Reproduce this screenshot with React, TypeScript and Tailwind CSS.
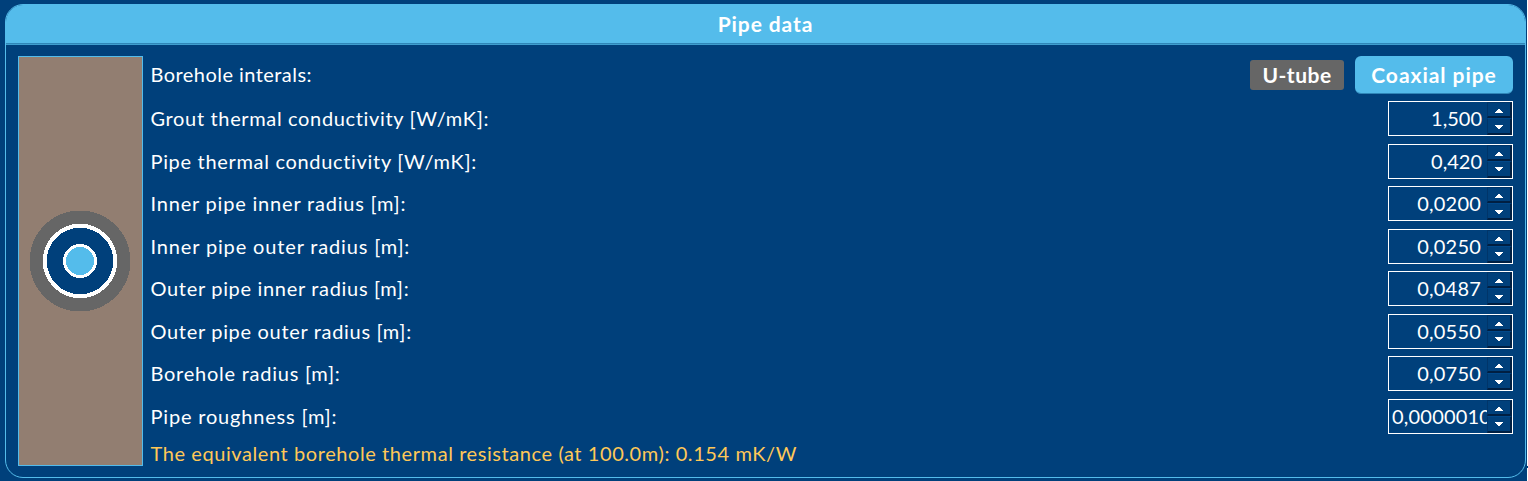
const fields = [
  { label: "Grout thermal conductivity [W/mK]:", value: "1,500", track: "tracking-[0.65px]" },
  { label: "Pipe thermal conductivity [W/mK]:", value: "0,420", track: "tracking-[0.68px]" },
  { label: "Inner pipe inner radius [m]:", value: "0,0200", track: "tracking-[0.8px]" },
  { label: "Inner pipe outer radius [m]:", value: "0,0250", track: "tracking-[0.85px]" },
  { label: "Outer pipe inner radius [m]:", value: "0,0487", track: "tracking-[0.68px]" },
  { label: "Outer pipe outer radius [m]:", value: "0,0550", track: "tracking-[0.68px]" },
  { label: "Borehole radius [m]:", value: "0,0750", track: "tracking-[0.75px]" },
  { label: "Pipe roughness [m]:", value: "0,0000010", track: "tracking-[0.82px]" },
];

function Arrow({ down = false }: { down?: boolean }) {
  return (
    <svg width="8" height="4" viewBox="0 0 8 4" className="fill-white" shapeRendering="crispEdges">
      <path d={down ? "M0 0h8v1H0zM1 1h6v1H1zM2 2h4v1H2zM3 3h2v1H3z" : "M3 0h2v1H3zM2 1h4v1H2zM1 2h6v1H1zM0 3h8v1H0z"} />
    </svg>
  );
}

function SpinBox({ value }: { value: string }) {
  return (
    <div className="flex h-[35px] w-[125px] border border-white">
      <div className={`flex min-w-0 flex-1 items-center overflow-hidden whitespace-nowrap pb-px ${value.length > 6 ? "pl-[3px] tracking-[0.2px]" : value.length > 5 ? "justify-end pr-[6px] tracking-[0.2px]" : "justify-end pr-[5px]"}`}>
        {value}
      </div>
      <div className="flex w-[25px] shrink-0 flex-col">
        <div className="flex h-4 items-center justify-center border-t border-r-2 border-b-2 border-l border-t-[#003569] border-r-[#001f42] border-b-[#001f42] border-l-[#003569] pt-[3px]"><Arrow /></div>
        <div className="flex h-[17px] items-center justify-center border-t border-r-2 border-b-2 border-l border-t-[#00488a] border-r-[#001f42] border-b-[#001f42] border-l-[#003569] pt-px"><Arrow down /></div>
      </div>
    </div>
  );
}

export default function App() {
  return (
    <div className="flex h-[481px] w-[1528px] bg-[#00407b] pl-[5px] font-['Lato',sans-serif] text-[20px] leading-[24px] text-white">
      <section className="mt-1 flex h-[474px] w-[1521px] shrink-0 flex-col overflow-hidden rounded-[18px] border border-[#54bceb]">
        <h1 className="flex h-[39px] shrink-0 items-center justify-center border-b border-[#2f86b8] bg-[#54bceb] pb-px text-[21px] font-bold tracking-[0.9px]">Pipe data</h1>
        <div className="h-px shrink-0 bg-[#3f9fd0]" />
        <div className="flex pt-[11px] pr-3 pl-3">
          <div className="flex h-[410px] w-[125px] shrink-0 items-center justify-center border border-[#54bceb] bg-[#927e71] pr-0.5">
            <svg width="102" height="102" viewBox="0 0 102 102" shapeRendering="crispEdges">
              <circle cx="51" cy="51" r="50.5" fill="#666" />
              <circle cx="51" cy="51" r="35.2" fill="#00407b" stroke="#fff" strokeWidth="4" />
              <circle cx="51" cy="51" r="15.5" fill="#54bceb" stroke="#fff" strokeWidth="3" />
            </svg>
          </div>
          <div className="flex flex-1 flex-col pl-[7.5px]">
            <div className="flex h-[38px] items-center">
              <span className="flex-1 pb-0.5 tracking-[0.45px]">Borehole interals:</span>
              <button className="mr-[11px] h-[30px] w-[94px] rounded-[3px] bg-[#666] pb-px text-[21px] font-bold tracking-[0.5px]">U-tube</button>
              <button className="h-[38px] w-[158px] rounded-md border-b border-[#2f86b8] bg-[#54bceb] text-[21px] font-bold tracking-[0.95px]">Coaxial pipe</button>
            </div>
            <div className="flex flex-col pt-[7px]">
              {fields.map((f) => (
                <div key={f.label} className="flex h-[42.5px] items-start justify-between">
                  <span className={`pt-[5px] ${f.track}`}>{f.label}</span>
                  <SpinBox value={f.value} />
                </div>
              ))}
            </div>
            <p className="tracking-[0.58px] text-[#ffc857]">The equivalent borehole thermal resistance (at 100.0m): 0.154 mK/W</p>
          </div>
        </div>
      </section>
      <div className="ml-px flex w-px shrink-0 flex-col gap-0.5">
        <div className="h-[466px] bg-white" />
        <div className="h-[13px] bg-white" />
      </div>
    </div>
  );
}
